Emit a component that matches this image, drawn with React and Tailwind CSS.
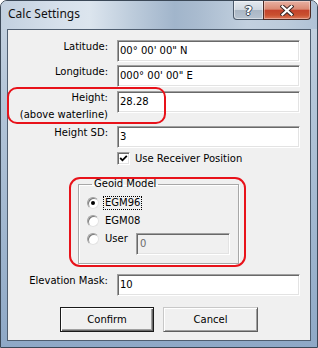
const FONT = "font-['DejaVu_Sans',sans-serif] text-[10px] leading-[12px] text-black";

function Field({ children, className = "", disabled = false }) {
  return (
    <div
      className={
        "h-[22px] border border-t-[#a0a0a0] border-l-[#a0a0a0] border-r-white border-b-white shadow-[inset_1px_1px_0_#696969,inset_-1px_-1px_0_#e3e3e3] flex items-center pl-[2px] pb-[1px] whitespace-nowrap " +
        (disabled ? "bg-[#f0f0f0] text-[#6d6d6d] pl-[3px] " : "bg-white ") +
        className
      }
    >
      {children}
    </div>
  );
}

function Row({ label, value, className = "" }) {
  return (
    <div className={"flex items-start " + className}>
      <div className="w-[100px] text-right pt-[1px] whitespace-nowrap">{label}</div>
      <Field className="ml-[9px] w-[183px]">{value}</Field>
    </div>
  );
}

function Radio({ checked }) {
  return (
    <div className="w-[12px] h-[12px] rounded-full border border-t-[#a0a0a0] border-l-[#a0a0a0] border-r-[#e3e3e3] border-b-[#e3e3e3] bg-white shadow-[inset_1px_1px_0_#7a7a7a] flex items-center justify-center shrink-0">
      {checked && <div className="w-[4px] h-[4px] rounded-full bg-black" />}
    </div>
  );
}

export default function App() {
  return (
    <div className={"relative w-[318px] h-[348px] overflow-hidden rounded-t-[7px] border border-[#3b4857] px-[6px] pb-[6px] flex flex-col bg-[linear-gradient(180deg,#c8d4e1_0px,#b7c8da_80px,#8ea8c6_348px)] " + FONT}>
      {/* title bar */}
      <div className="-mx-[6px] px-[6px] h-[28px] shrink-0 flex items-start justify-between bg-[linear-gradient(90deg,#c2d0df_0%,#d6e0eb_18%,#dce5ee_28%,#bccbdb_42%,#a1b5cb_55%,#a9bbcf_62%,#c2d0df_78%,#bccbdb_90%,#b0c2d6_100%)]">
        <div className="pl-[1px] pt-[5px] font-['Noto_Sans',sans-serif] text-[12px] leading-[16px] text-[#111]">
          Calc Settings
        </div>
        <div className="flex">
          <div className="w-[31px] h-[19px] border border-[#4b596a] border-t-0 rounded-bl-[4px] bg-[linear-gradient(180deg,#e4e9ef_0%,#d0d8e1_48%,#aab7c5_52%,#b7c3d0_100%)] flex items-center justify-center shadow-[inset_0_0_0_1px_rgba(255,255,255,0.45)]">
            <span className="font-['DejaVu_Sans',sans-serif] font-bold text-[13px] leading-[13px] text-white [text-shadow:1px_0_0_#3a4656,-1px_0_0_#3a4656,0_1px_0_#3a4656,0_-1px_0_#3a4656]">
              ?
            </span>
          </div>
          <div className="-ml-px w-[48px] h-[19px] border border-[#4d2a24] border-t-0 rounded-br-[4px] bg-[linear-gradient(180deg,#e7b1a3_0%,#da8a74_45%,#c4432b_52%,#c9502f_78%,#dd7a5c_100%)] flex items-center justify-center shadow-[inset_0_0_0_1px_rgba(255,255,255,0.35)]">
            <svg width="14" height="11" viewBox="0 0 14 11">
              <path d="M2.5 1.5 L11.5 9.5 M11.5 1.5 L2.5 9.5" stroke="#3d2a28" strokeWidth="4.2" strokeLinecap="square" />
              <path d="M2.5 1.5 L11.5 9.5 M11.5 1.5 L2.5 9.5" stroke="#ffffff" strokeWidth="2.2" strokeLinecap="square" />
            </svg>
          </div>
        </div>
      </div>

      {/* client */}
      <div className="flex-1 bg-[#f0f0f0] border border-[#4f5e70] flex flex-col pt-[10px]">
        <Row label="Latitude:" value={"00°  00' 00\" N"} />
        <Row label="Longitude:" value={"000°  00' 00\" E"} className="mt-[3px]" />
        <div className="flex items-start mt-[4px]">
          <div className="w-[100px] text-right pt-[1px] whitespace-nowrap">
            <div>Height:</div>
            <div className="mt-[5px]">(above waterline)</div>
          </div>
          <Field className="ml-[9px] w-[183px]">28.28</Field>
        </div>
        <Row label="Height SD:" value="3" className="mt-[5px]" />

        {/* checkbox */}
        <div className="flex items-center mt-[4px] ml-[109px] h-[13px]">
          <div className="w-[13px] h-[13px] border border-t-[#a0a0a0] border-l-[#a0a0a0] border-r-white border-b-white shadow-[inset_1px_1px_0_#696969,inset_-1px_-1px_0_#e3e3e3] bg-white flex items-center justify-center">
            <svg width="9" height="9" viewBox="0 0 9 9">
              <path d="M1.2 4 L3.5 6.3 L7.8 1.8" stroke="#000" strokeWidth="1.8" fill="none" />
            </svg>
          </div>
          <span className="ml-[5px]">Use Receiver Position</span>
        </div>

        {/* group box */}
        <fieldset className="mt-[13px] ml-[70px] w-[161px] border border-[#a8a8a8] shadow-[inset_1px_1px_0_#fff,1px_1px_0_#fff] pl-[8px] pb-[8px]">
          <legend className="ml-[5px] px-[2px] leading-[12px]">Geoid Model</legend>
          <div className="flex items-center h-[16px] mt-[5px]">
            <Radio checked />
            <span className="ml-[4px] border border-dotted border-black px-[1px] leading-[12px]">EGM96</span>
          </div>
          <div className="flex items-center h-[16px] mt-[2px]">
            <Radio />
            <span className="ml-[4px] border border-transparent px-[1px] leading-[12px]">EGM08</span>
          </div>
          <div className="flex items-start mt-[2px]">
            <div className="flex items-center h-[16px]">
              <Radio />
              <span className="ml-[4px] w-[33px] border border-transparent px-[1px] leading-[12px]">User</span>
            </div>
            <Field disabled className="mt-[2px] w-[94px]">0</Field>
          </div>
        </fieldset>

        <Row label="Elevation Mask:" value="10" className="mt-[10px]" />

        {/* buttons */}
        <div className="flex mt-[11px] ml-[52px] gap-[9px]">
          <div className="w-[94px] h-[25px] border border-[#1a1a1a] shadow-[inset_1px_1px_0_#fff,inset_-1px_-1px_0_#696969,inset_-2px_-2px_0_#a0a0a0] bg-[#f0f0f0] flex items-center justify-center">
            Confirm
          </div>
          <div className="w-[95px] h-[25px] border border-t-[#c8c8c8] border-l-[#c8c8c8] border-r-[#5e5e5e] border-b-[#5e5e5e] shadow-[inset_1px_1px_0_#fff,inset_-1px_-1px_0_#a0a0a0] bg-[#f0f0f0] flex items-center justify-center">
            Cancel
          </div>
        </div>
      </div>

      {/* annotation highlights */}
      <div className="absolute left-[6px] top-[86px] w-[159px] h-[37px] border-2 border-[#e8121a] rounded-[10px] pointer-events-none" />
      <div className="absolute left-[68px] top-[176px] w-[177px] h-[90px] border-2 border-[#e8121a] rounded-[11px] pointer-events-none" />
    </div>
  );
}
